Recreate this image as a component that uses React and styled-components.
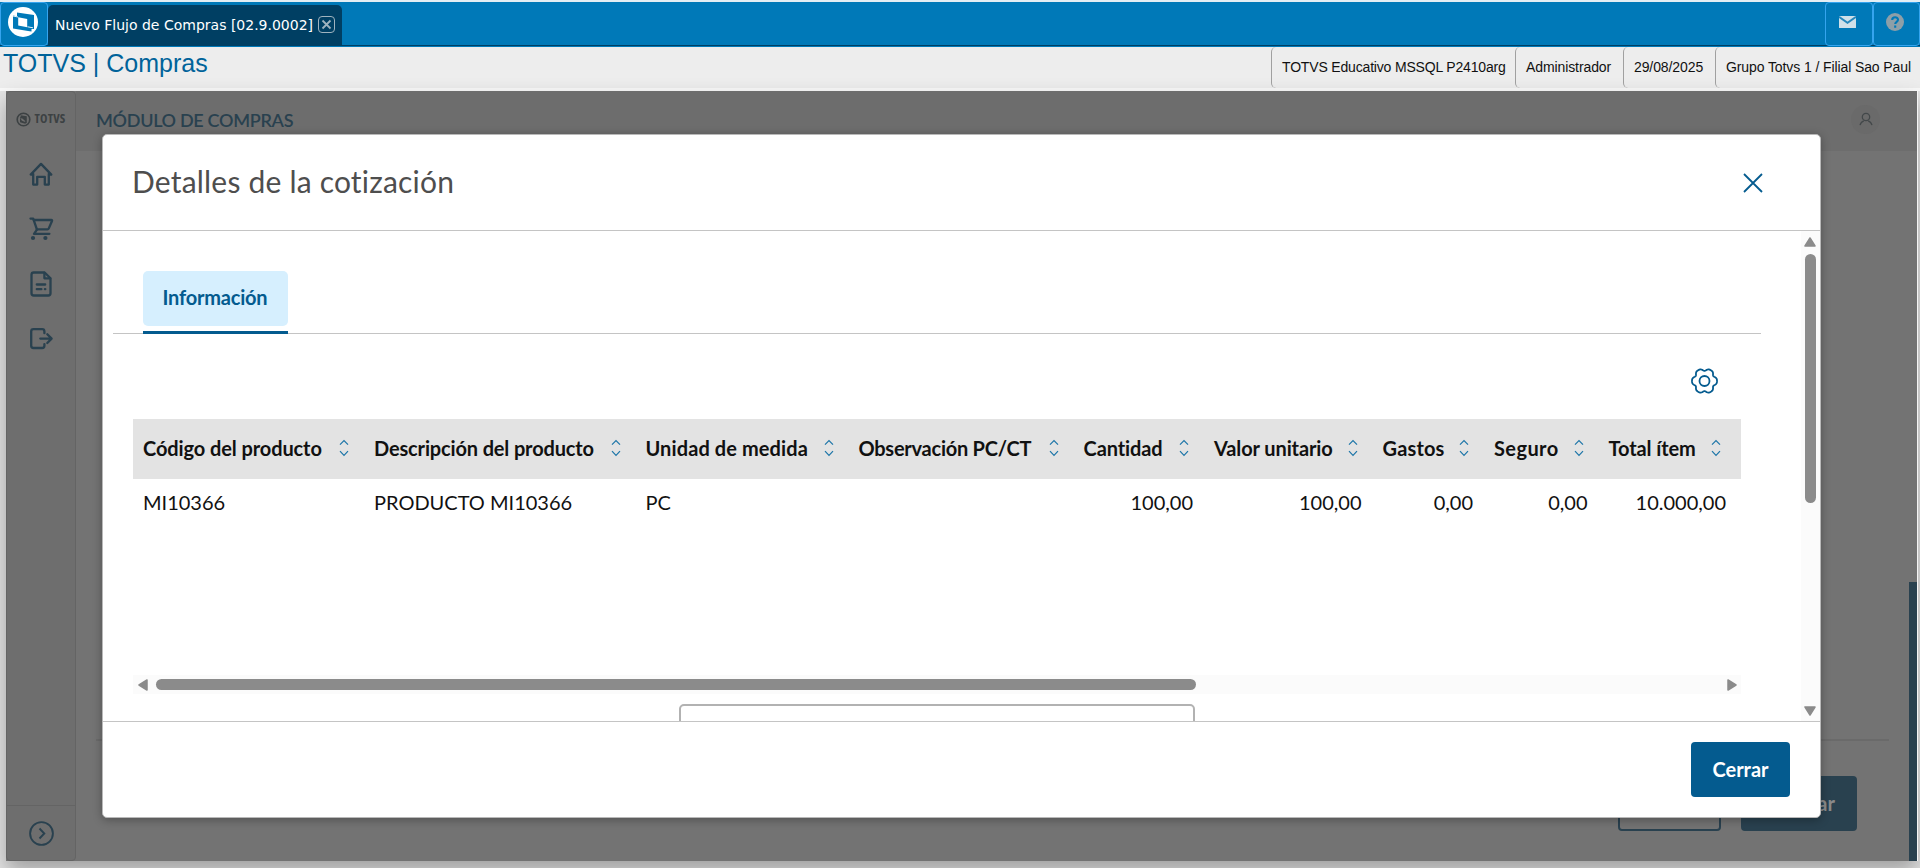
import React from 'react'
import styled, { createGlobalStyle, css } from 'styled-components'

const colors = {
  brand: '#045b8f',
  topbar: '#0079b8',
  topbarDark: '#003f63',
  dimBrand: '#29414f',
  dimPage: '#737373',
  dimPanel: '#6d6d6d',
  dimLine: '#646464',
  line: '#c4c4c4',
  scroll: '#8b8b8b'
}

const GlobalStyle = createGlobalStyle`
  * {
    box-sizing: border-box;
  }
  body {
    margin: 0;
    background: #e4e4e4;
    font-family: Lato, sans-serif;
    font-variant-ligatures: none;
    overflow: hidden;
  }
`

const Page = styled.div`
  display: flex;
  flex-direction: column;
  width: 1920px;
  height: 868px;
  overflow: hidden;
`

/* ---------- top bar ---------- */

const TopBar = styled.header`
  display: flex;
  flex: none;
  height: 47px;
  border-top: 2px solid #e3eef4;
  background: linear-gradient(
    to bottom,
    ${colors.topbar} 43px,
    ${colors.topbarDark} 43px,
    ${colors.topbarDark} 44px,
    ${colors.topbar} 44px
  );
`

const BarButton = styled.button`
  display: flex;
  align-items: ${props => (props.$logo ? 'center' : 'flex-start')};
  justify-content: center;
  width: ${props => props.$width};
  height: 44px;
  padding: ${props => props.$padding};
  border: 1px solid #35a4ee;
  border-radius: 4px;
  background: ${colors.topbar};
`

const ProgramTab = styled.div`
  display: flex;
  align-items: center;
  width: 294px;
  height: 41px;
  margin-top: 3px;
  padding: 0 0 2px 7px;
  border-radius: 5px 5px 0 0;
  background: ${colors.topbarDark};
  color: #fff;
  font: 14px 'DejaVu Sans', sans-serif;
  white-space: nowrap;
`

const TabClose = styled.svg`
  flex: none;
  margin: 0 0 1px 5px;
`

const Spacer = styled.div`
  flex: 1;
`

const InfoBar = styled.div`
  display: flex;
  flex: none;
  height: 44px;
  border-bottom: 3px solid #fafafa;
  background: #ededed;
  font-family: 'Liberation Sans', sans-serif;
`

const ProgramTitle = styled.h1`
  flex: 1;
  margin: 0;
  padding: 1px 0 0 3px;
  color: #00639a;
  font-size: 25px;
  font-weight: 400;
  line-height: 30px;
`

const InfoCell = styled.div`
  width: ${props => props.$width};
  height: 41px;
  padding-left: 10px;
  border-left: 1px solid #a0a0a0;
  border-radius: 5px 0 0 5px;
  color: #111;
  font-size: 14px;
  letter-spacing: ${props => props.$tracking || '-0.1px'};
  line-height: 40px;
  white-space: nowrap;
`

/* ---------- dimmed application ---------- */

const Frame = styled.div`
  position: relative;
  display: flex;
  flex: none;
  width: 1911px;
  height: 770px;
  margin-left: 6px;
  background: ${colors.dimPage};
  box-shadow: 1px 0 0 #f4f4f4, 0 10px 20px rgba(0, 0, 0, 0.3);
`

const Sidebar = styled.aside`
  display: flex;
  flex-direction: column;
  align-items: center;
  width: 70px;
  border: 1px solid ${colors.dimLine};
  border-radius: 4px;
  background: #6e6e6e;
  color: ${colors.dimBrand};
`

const Brand = styled.div`
  display: flex;
  align-items: center;
  gap: 3px;
  height: 54px;
  color: #3c4143;
  font: 700 12.5px/12px 'Open Sans', sans-serif;
  font-stretch: 75%;
  letter-spacing: 0.2px;
`

const NavItem = styled.div`
  display: flex;
  align-items: center;
  justify-content: center;
  width: 100%;
  height: 55px;
`

const Expand = styled(NavItem)`
  margin-top: auto;
  border-top: 1px solid ${colors.dimLine};
`

const Main = styled.main`
  display: flex;
  flex: 1;
  flex-direction: column;
`

const Toolbar = styled.div`
  display: flex;
  align-items: center;
  justify-content: space-between;
  height: 60px;
  padding: 0 37px 4px 20px;
  background: ${colors.dimPanel};
`

const ToolbarTitle = styled.div`
  padding-top: 2px;
  color: ${colors.dimBrand};
  font-size: 18px;
  font-weight: 600;
  letter-spacing: -0.3px;
  line-height: 24px;
`

const Avatar = styled.div`
  display: flex;
  align-items: center;
  justify-content: center;
  width: 29px;
  height: 29px;
  border-radius: 50%;
  background: #6a6a6a;
`

const PageArea = styled.div`
  display: flex;
  flex: 1;
`

const PageContent = styled.div`
  display: flex;
  flex: 1;
  flex-direction: column;
  justify-content: flex-end;
`

const PageActions = styled.div`
  display: flex;
  justify-content: flex-end;
  gap: 20px;
  margin: 0 20px;
  padding: 35px 32px 30px 0;
  border-top: 2px solid #6a6a6a;
`

const DimButton = styled.div`
  width: ${props => props.$width};
  height: 55px;
  border: 2px solid ${colors.dimBrand};
  border-radius: 4px;
  background: ${props => (props.$filled ? colors.dimBrand : 'transparent')};
  color: #8a8a8a;
  font-size: 20px;
  font-weight: 700;
  line-height: 50px;
  text-align: center;
`

const PageScroll = styled.div`
  display: flex;
  align-items: flex-end;
  width: 8px;

  &::after {
    content: '';
    width: 8px;
    height: 279px;
    background: ${colors.dimBrand};
  }
`

/* ---------- modal ---------- */

const Modal = styled.section`
  position: absolute;
  top: 43px;
  left: 96px;
  display: flex;
  flex-direction: column;
  width: 1719px;
  height: 684px;
  overflow: hidden;
  border: 1px solid #b9b9b9;
  border-radius: 5px;
  background: #fff;
  box-shadow: 0 2px 10px rgba(0, 0, 0, 0.3);
`

const ModalHeader = styled.div`
  display: flex;
  align-items: center;
  justify-content: space-between;
  height: 96px;
  padding: 0 57px 0 29px;
  border-bottom: 1px solid ${colors.line};
`

const ModalTitle = styled.h2`
  margin: 0;
  padding-bottom: 3px;
  color: #4e4e4e;
  font-size: 30px;
  font-weight: 400;
  letter-spacing: 0.2px;
  line-height: 40px;
`

const ModalBody = styled.div`
  display: flex;
  height: 490px;
  overflow: hidden;
`

const ModalContent = styled.div`
  flex: 1;
  min-width: 0;
`

const ModalFooter = styled.div`
  display: flex;
  align-items: flex-start;
  justify-content: flex-end;
  flex: 1;
  padding: 20px 30px 0 0;
  border-top: 1px solid ${colors.line};
`

const PrimaryButton = styled.button`
  width: 99px;
  height: 55px;
  padding: 0 0 2px;
  border: 0;
  border-radius: 4px;
  background: ${colors.brand};
  color: #fff;
  font: 700 20px Lato, sans-serif;
`

const Tabs = styled.div`
  display: flex;
  height: 103px;
  margin: 0 40px 0 10px;
  padding: 40px 0 0 30px;
  border-bottom: 1px solid ${colors.line};
`

const Tab = styled.div`
  display: flex;
  flex-direction: column;
  justify-content: space-between;
  width: 145px;
  height: 63px;
  border-bottom: 3px solid ${colors.brand};
`

const TabLabel = styled.div`
  height: 55px;
  padding-right: 1px;
  border-radius: 5px;
  background: #d6effe;
  color: ${colors.brand};
  font-size: 20px;
  font-weight: 700;
  letter-spacing: -0.2px;
  line-height: 53px;
  text-align: center;
`

const Grid = styled.div`
  margin: 0 60px 0 30px;
`

const GridTools = styled.div`
  display: flex;
  justify-content: flex-end;
  height: 85px;
  padding: 34px 22px 0 0;
`

const GridRow = styled.div`
  display: grid;
  grid-template-columns: 231px 271.5px 213px 225px 130.5px 168.5px 111.5px 114.5px 142.5px;
  align-items: center;
  height: ${props => (props.$head ? '60px' : '46px')};
  background: ${props => (props.$head ? '#e3e3e3' : '#fff')};
`

const cell = css`
  padding-left: 10px;
  color: #111;
  font-size: 20px;
  line-height: 24px;
  white-space: nowrap;
`

const HeadCell = styled.div`
  ${cell}
  display: flex;
  align-items: center;
  justify-content: space-between;
  padding-right: 15px;
  padding-bottom: 2px;
  font-weight: 700;
  letter-spacing: ${props => props.$tracking || '-0.1px'};

  &:last-child {
    padding-right: 20px;
  }
`

const HeadLabel = styled.span`
  padding-bottom: 1px;
`

const Cell = styled.div`
  ${cell}
  padding-right: 11px;
  text-align: ${props => (props.$number ? 'right' : 'left')};

  &:last-child {
    padding-right: 15px;
  }
`

const GridSpace = styled.div`
  height: 150px;
`

const Track = styled.div`
  display: flex;
  align-items: center;
  flex: none;
  flex-direction: ${props => (props.$vertical ? 'column' : 'row')};
  justify-content: space-between;
  ${props => (props.$vertical ? 'width: 19px; padding: 6px 1px 5px 0;' : 'height: 19px; padding: 0 4px 0 5px;')}
  background: #fbfbfb;
`

const Thumb = styled.div`
  ${props =>
    props.$vertical
      ? 'width: 11px; height: 249px; margin: 7px 0 auto;'
      : 'width: 1040px; height: 11px; margin: 0 auto 0 8px;'}
  border-radius: 6px;
  background: ${colors.scroll};
`

const FieldBox = styled.div`
  width: 516px;
  height: 50px;
  margin: 10px 0 0 546px;
  border: 2px solid #b2b2b2;
  border-radius: 5px;
`

const LogoMark = () => (
  <svg width="30" height="30" viewBox="0 0 30 30">
    <circle cx="15" cy="15" r="15" fill="#fff" />
    <path d="M9 5.5 26 8v14h-2.500v2.500L20 24 5 21.500V8.600l4 .6z" fill={colors.topbar} />
    <path d="M10.200 10.300l9 1.700v8.200l-9-1.700z" fill="#fff" />
    <path d="M5 9l5 1M19.500 19.800l5.500 1" stroke="#fff" strokeWidth=".9" />
  </svg>
)

const SmallLogo = () => (
  <svg width="15" height="15" viewBox="0 0 15 15" fill="none">
    <circle cx="7.500" cy="7.500" r="6.300" stroke="currentColor" strokeWidth="1.600" />
    <path d="M4.600 3.300l6.200 1v6.400l-1.600 1-5.200-1.500V5.200l.6.100z" fill="currentColor" />
    <path d="M4.200 6.200l2.200.4 2.800 2.400v1L6 8.800z" fill="#6e6e6e" />
  </svg>
)

const MailIcon = () => (
  <svg width="17" height="12" viewBox="0 0 17 12">
    <rect width="17" height="12" rx=".5" fill="#cfe0e9" />
    <path d="M0 .8 8.500 6.800 17 .8" fill="none" stroke="#2487bd" strokeWidth="1.800" />
  </svg>
)

const HelpIcon = () => (
  <svg width="18" height="18" viewBox="0 0 18 18">
    <circle cx="9" cy="9" r="9" fill="#8d9fa8" />
    <path
      d="M6.200 7c0-3.600 5.800-3.500 5.800-.2 0 2-2.800 2-2.800 4.200M9.200 12.600v2.200"
      fill="none"
      stroke={colors.topbar}
      strokeWidth="2.100"
    />
  </svg>
)

const navIcons = [
  {
    name: 'home',
    paths: ['M3.600 12.600H1.700L12 1.900l10.300 10.700h-1.900', 'M4.200 12v10.600h4V14.800h7.600v7.800h4V12']
  },
  {
    name: 'cart',
    paths: [
      'M1.500 1.600h2.700L8 12.600l-3 4.200h15.400',
      'M4.800 3h17.600c.6 0 .9.500.6 1l-3.200 7.400c-.3.700-.7 1-1.300 1H7.800'
    ],
    dots: [[4, 21], [16.4, 21]]
  },
  {
    name: 'document',
    paths: [
      'M15.600.500H4.800C3.300.500 2.500 1.300 2.500 2.700v18.600c0 1.400.8 2.200 2.300 2.200h14.400c1.500 0 2.300-.8 2.300-2.200V6.300z',
      'M15.400.900v5.400h5.800',
      'M7.800 12.500h8.400M7.800 17.200h4.600M15.900 17.200h.4'
    ]
  },
  {
    name: 'exit',
    paths: [
      'M15.400 6.200V4.400c0-1.500-.8-2.200-2.200-2.200H4.500C3 2.200 2.200 3 2.200 4.400v14.400C2.200 20.200 3 21 4.500 21h8.700c1.400 0 2.200-.7 2.200-2.200v-1.700',
      'M11.300 11.600H22.300M18.300 7.200l4.300 4.400-4.300 4.400'
    ]
  }
]

const NavIcon = ({ paths, dots = [] }) => (
  <svg
    width="24"
    height="24"
    viewBox="0 0 24 24"
    fill="none"
    stroke="currentColor"
    strokeWidth="2.300"
    strokeLinecap="round"
    strokeLinejoin="round"
    overflow="visible"
  >
    {paths.map(d => (
      <path key={d} d={d} />
    ))}
    {dots.map(([x, y]) => (
      <circle key={x} cx={x} cy={y} r="2.1" fill="currentColor" stroke="none" />
    ))}
  </svg>
)

// six rounded teeth, one on each side of the horizontal axis
const gearPath = () => {
  const points = []
  for (let a = 0; a < 360; a += 3) {
    const t = (a * Math.PI) / 180
    const r = 11.6 + 1.2 * Math.cos(6 * t) - 0.3 * Math.cos(12 * t)
    points.push(`${(13.5 + r * Math.cos(t)).toFixed(2)} ${(13 + r * Math.sin(t)).toFixed(2)}`)
  }
  return `M${points.join('L')}z`
}

const GearIcon = () => (
  <svg width="28" height="27" viewBox="0 0 28 27" fill="none" stroke={colors.brand} strokeWidth="1.8">
    <path d={gearPath()} strokeLinejoin="round" />
    <circle cx="13.5" cy="13" r="5" />
  </svg>
)

const SortIcon = () => (
  <svg width="10" height="18" viewBox="0 0 10 18" fill="none" stroke="#1c75a8" strokeWidth="1.2">
    <path d="M1 5.7l4-4.2 4 4.200M1 12.200l4 4.200 4-4.200" />
  </svg>
)

const Arrow = ({ to }) => {
  const vertical = to === 'up' || to === 'down'
  const shapes = {
    left: 'M9 1v10L1 6z',
    right: 'M1 1v10l8-5z',
    up: 'M1 9h10L6 1z',
    down: 'M1 1h10L6 9z'
  }
  return (
    <svg width={vertical ? 12 : 10} height={vertical ? 10 : 12}>
      <path d={shapes[to]} fill={colors.scroll} stroke={colors.scroll} strokeWidth="1.5" strokeLinejoin="round" />
    </svg>
  )
}

const columns = [
  { label: 'Código del producto', value: 'MI10366' },
  { label: 'Descripción del producto', value: 'PRODUCTO MI10366', tracking: '-0.150px' },
  { label: 'Unidad de medida', value: 'PC', tracking: '0.1px' },
  { label: 'Observación PC/CT', value: '', tracking: '-0.250px' },
  { label: 'Cantidad', value: '100,00', number: true },
  { label: 'Valor unitario', value: '100,00', number: true },
  { label: 'Gastos', value: '0,00', number: true, tracking: '0.15px' },
  { label: 'Seguro', value: '0,00', number: true, tracking: '0.4px' },
  { label: 'Total ítem', value: '10.000,00', number: true }
]

const DetailsModal = () => (
  <Modal>
    <ModalHeader>
      <ModalTitle>Detalles de la cotización</ModalTitle>
      <svg width="20" height="20" fill="none" stroke={colors.brand} strokeWidth="1.8">
        <path d="M1 1l18 18M19 1 1 19" />
      </svg>
    </ModalHeader>
    <ModalBody>
      <ModalContent>
        <Tabs>
          <Tab>
            <TabLabel>Información</TabLabel>
          </Tab>
        </Tabs>
        <Grid>
          <GridTools>
            <GearIcon />
          </GridTools>
          <GridRow $head>
            {columns.map(({ label, tracking }) => (
              <HeadCell key={label} $tracking={tracking}>
                <HeadLabel>{label}</HeadLabel>
                <SortIcon />
              </HeadCell>
            ))}
          </GridRow>
          <GridRow>
            {columns.map(({ label, value, number }) => (
              <Cell key={label} $number={number}>
                {value}
              </Cell>
            ))}
          </GridRow>
          <GridSpace />
          <Track>
            <Arrow to="left" />
            <Thumb />
            <Arrow to="right" />
          </Track>
          <FieldBox />
        </Grid>
      </ModalContent>
      <Track $vertical>
        <Arrow to="up" />
        <Thumb $vertical />
        <Arrow to="down" />
      </Track>
    </ModalBody>
    <ModalFooter>
      <PrimaryButton>Cerrar</PrimaryButton>
    </ModalFooter>
  </Modal>
)

const App = () => (
  <Page>
    <GlobalStyle />
    <TopBar>
      <BarButton $logo $width="48px" $padding="0 2px 4px 0">
        <LogoMark />
      </BarButton>
      <ProgramTab>
        Nuevo Flujo de Compras [02.9.0002]
        <TabClose width="17" height="17" viewBox="0 0 17 17" fill="none" stroke="#9fb3bf">
          <rect x=".5" y=".5" width="16" height="16" rx="3.5" />
          <path d="M4.500 4.500l8 8M12.500 4.500l-8 8" strokeWidth="1.8" />
        </TabClose>
      </ProgramTab>
      <Spacer />
      <BarButton $width="48px" $padding="13px 3px 0 0">
        <MailIcon />
      </BarButton>
      <BarButton $width="47px" $padding="10px 4px 0 0">
        <HelpIcon />
      </BarButton>
    </TopBar>
    <InfoBar>
      <ProgramTitle>TOTVS | Compras</ProgramTitle>
      <InfoCell $width="244px" $tracking="-0.17px">
        TOTVS Educativo MSSQL P2410arg
      </InfoCell>
      <InfoCell $width="108px">Administrador</InfoCell>
      <InfoCell $width="92px">29/08/2025</InfoCell>
      <InfoCell $width="205px">Grupo Totvs 1 / Filial Sao Paul</InfoCell>
    </InfoBar>
    <Frame>
      <Sidebar>
        <Brand>
          <SmallLogo />
          TOTVS
        </Brand>
        {navIcons.map(icon => (
          <NavItem key={icon.name}>
            <NavIcon {...icon} />
          </NavItem>
        ))}
        <Expand>
          <svg width="25" height="25" fill="none" stroke="currentColor" strokeWidth="1.9">
            <circle cx="12.5" cy="12.5" r="11.4" />
            <path d="M10.500 7.500l4.800 5-4.800 5" />
          </svg>
        </Expand>
      </Sidebar>
      <Main>
        <Toolbar>
          <ToolbarTitle>MÓDULO DE COMPRAS</ToolbarTitle>
          <Avatar>
            <svg width="14" height="14" fill="none" stroke="#43484a" strokeWidth="1.3">
              <circle cx="7" cy="5" r="3.7" />
              <path d="M1 13.200c.6-2.400 2-3.800 3.800-4.400M13 13.200c-.6-2.400-2-3.800-3.800-4.400" />
            </svg>
          </Avatar>
        </Toolbar>
        <PageArea>
          <PageContent>
            <PageActions>
              <DimButton $width="103px" />
              <DimButton $width="116px" $filled>
                Guardar
              </DimButton>
            </PageActions>
          </PageContent>
          <PageScroll />
        </PageArea>
      </Main>
      <DetailsModal />
    </Frame>
  </Page>
)

export default App
